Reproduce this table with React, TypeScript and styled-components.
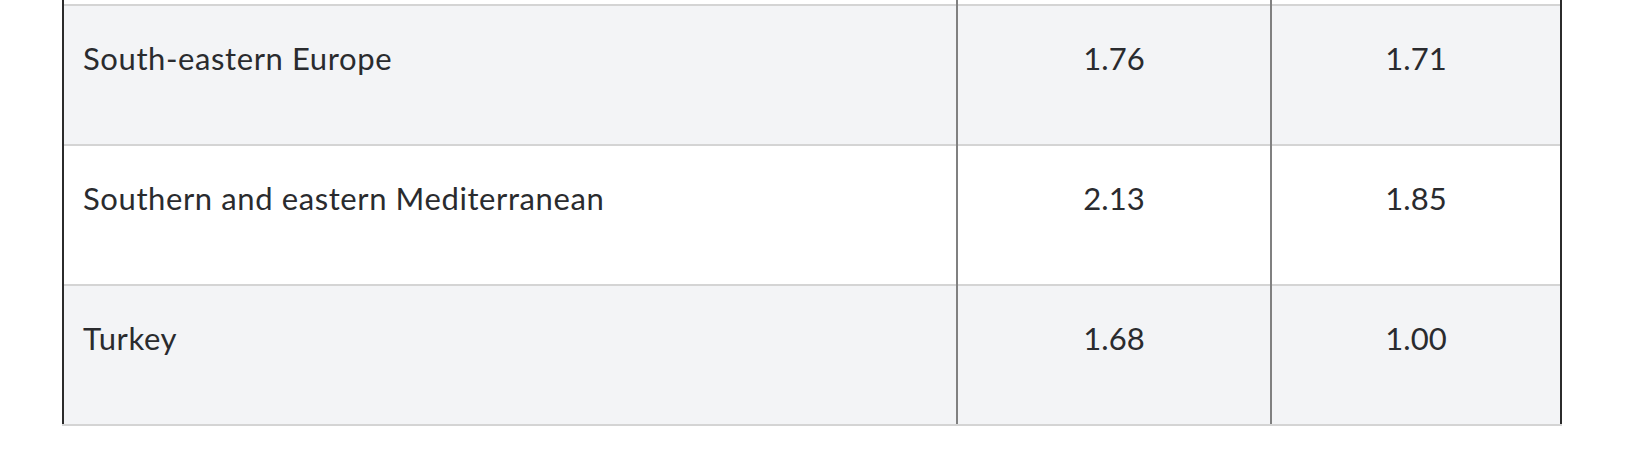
import React from "react";
import styled, { createGlobalStyle } from "styled-components";

const GlobalStyle = createGlobalStyle`
  html, body {
    margin: 0;
    padding: 0;
    background: #ffffff;
    overflow: hidden;
  }
  body {
    font-family: Lato, "Open Sans", "Liberation Sans", sans-serif;
    color: #333333;
  }
`;

const Page = styled.div`
  padding-left: 62px;
  height: 462px;
  overflow: hidden;
`;

const Table = styled.div`
  width: 1500px;
  margin-top: -136px;
  border-bottom: 2px solid #d4d4d4;
  display: flex;
  flex-direction: column;
`;

const Row = styled.div`
  display: grid;
  grid-template-columns: 892px 312px 288px;
  column-gap: 2px;
  background: #808080;
  border-left: 2px solid #2b2b2b;
  border-right: 2px solid #2b2b2b;
`;

const Cell = styled.div<{ $striped: boolean; $numeric?: boolean }>`
  box-sizing: border-box;
  height: 140px;
  border-top: 2px solid #d4d4d4;
  background: ${(p) => (p.$striped ? "#f3f4f6" : "#ffffff")};
  padding: 31px 20px 0 ${(p) => (p.$numeric ? "20px" : "19px")};
  font-size: 31px;
  line-height: 42px;
  letter-spacing: ${(p) => (p.$numeric ? "0" : "0.6px")};
  text-align: ${(p) => (p.$numeric ? "center" : "left")};
  color: #2a2b2e;
`;

const rows: [string, string, string][] = [
  ["", "", ""],
  ["South-eastern Europe", "1.76", "1.71"],
  ["Southern and eastern Mediterranean", "2.13", "1.85"],
  ["Turkey", "1.68", "1.00"],
];

export default function App() {
  return (
    <>
      <GlobalStyle />
      <Page>
        <Table>
          {rows.map(([name, a, b], i) => {
            const striped = i % 2 === 1;
            return (
              <Row key={i}>
                <Cell $striped={striped}>{name}</Cell>
                <Cell $striped={striped} $numeric>
                  {a}
                </Cell>
                <Cell $striped={striped} $numeric>
                  {b}
                </Cell>
              </Row>
            );
          })}
        </Table>
      </Page>
    </>
  );
}
